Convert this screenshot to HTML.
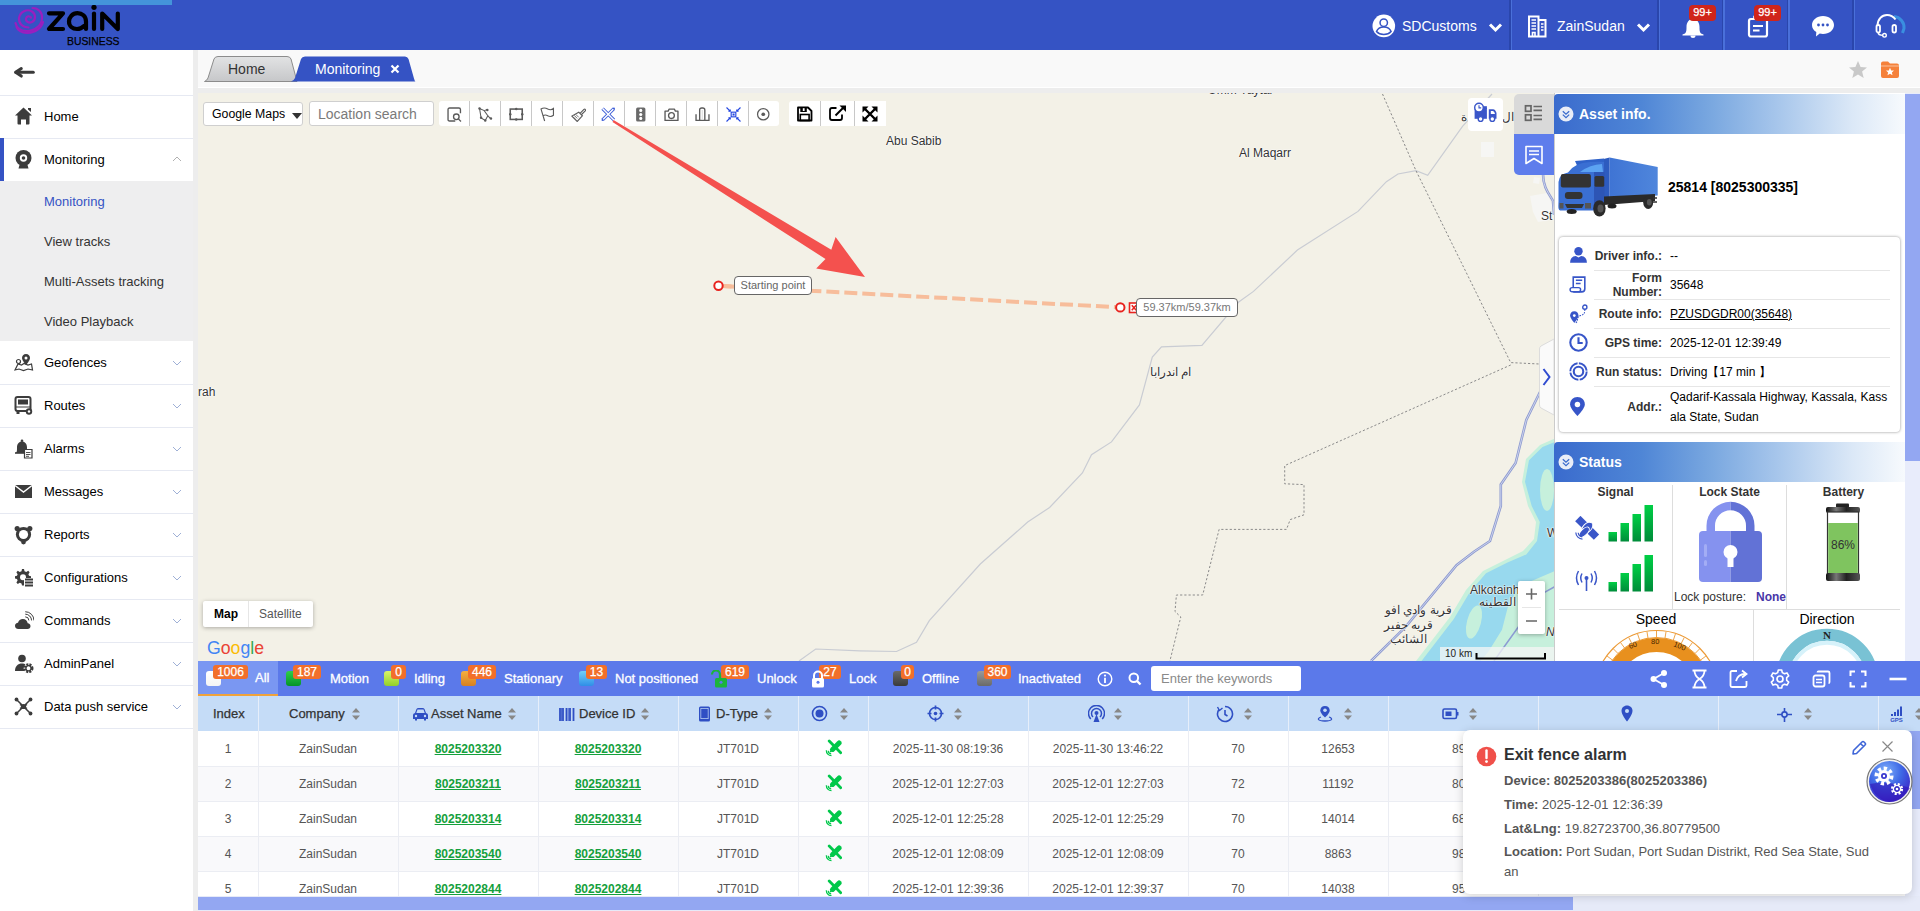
<!DOCTYPE html>
<html><head><meta charset="utf-8">
<style>
*{box-sizing:border-box;margin:0;padding:0}
html,body{width:1920px;height:911px;overflow:hidden;background:#fff;font-family:"Liberation Sans",sans-serif;font-size:13px;color:#333}
.abs{position:absolute}
#hdr{left:0;top:0;width:1920px;height:50px;background:#3553c4}
#prog{left:0;top:0;width:172px;height:5px;background:#4494da}
#side{left:0;top:50px;width:193px;height:861px;background:#fff}
#gut{left:193px;top:50px;width:5px;height:861px;background:#ededed}
#tabs{left:198px;top:50px;width:1722px;height:37px;background:#f9f9f9;z-index:5;border-bottom:1px solid #fff;height:38px}
#tabgut{left:198px;top:88px;width:1722px;height:5px;background:#ededed;z-index:5}
#map{left:198px;top:93px;width:1722px;height:568px;background:#f3f1e7;overflow:hidden}
#sbar{left:198px;top:661px;width:1722px;height:35px;background:#5b79ea}
#thead{left:198px;top:696px;width:1722px;height:35px;background:#c5dcf7}
#tbody{left:198px;top:731px;width:1722px;height:165px;background:#fff;overflow:hidden}
#hscroll{left:198px;top:896px;width:1722px;height:15px;background:#e6eaf8}
.htxt{color:#fff;font-size:14px;line-height:16px;white-space:nowrap;top:18px!important}
.hsep{top:0;width:3px;height:50px;background:linear-gradient(90deg,#2a46ac 0,#2a46ac 50%,#4a70da 50%,#4a70da 100%)}
.hbadge{background:#d0251a;color:#fff;font-size:11px;line-height:15px;height:16px;width:27px;text-align:center;border-radius:4px;-webkit-text-stroke:0.25px #fff}
.sl{left:0;width:193px;height:1px;background:#e6e9f2}
.mi{left:44px;height:43px;line-height:43px;font-size:13px;color:#000;white-space:nowrap}
.si{left:44px;height:40px;line-height:40px;font-size:13px;color:#333;white-space:nowrap}
.si.act{color:#3553c4}
.tsel{background:#fff;border:1px solid #cfcfcf;border-radius:3px;font-size:12.3px;line-height:15px;color:#000;white-space:nowrap}
.mtxt{font-size:12px;line-height:14px;color:#333;white-space:nowrap;text-shadow:0 0 2px #fff,0 0 2px #fff,0 0 1px #fff}
.phdr{background:linear-gradient(90deg,#3a6bcd 0%,#4f86d6 25%,#7aa8e0 45%,#aac8ec 65%,#dbe8f7 85%,#f7fafd 100%);border-radius:4px 0 0 0}
.plab{left:36px;width:72px;text-align:right;font-size:12px;line-height:16px;font-weight:bold;color:#333;white-space:nowrap}
.pval{left:116px;font-size:12px;line-height:16px;color:#000;white-space:nowrap}
.stt{text-align:center;font-size:12px;line-height:14px;font-weight:bold;color:#333}
.sbadge{top:4px;height:14px;line-height:14px;background:#f26f2a;color:#fff;font-size:12px;text-align:center;border-radius:3px;-webkit-text-stroke:0.25px #fff}
.stxt{top:10px;font-size:13px;line-height:15px;color:#fff;white-space:nowrap;-webkit-text-stroke:0.3px #fff}
.tht{top:10px;font-size:13px;line-height:15px;color:#333;white-space:nowrap;-webkit-text-stroke:0.25px #333}
.td{height:35px;line-height:36px;text-align:center;font-size:12px;color:#555;white-space:nowrap}
.td a{color:#14a03c;font-weight:bold;text-decoration:underline}
.pop{left:1504px;font-size:13px;line-height:16px;color:#555;white-space:nowrap}
.pop b{color:#555}
</style></head>
<body>
<div id="hdr" class="abs">
<svg class="abs" style="left:0;top:0" width="130" height="50" viewBox="0 0 130 50">
 <g fill="none" stroke="#9a1fbf" stroke-width="2.2" stroke-linecap="round" transform="translate(5.5,0)">
  <path d="M25.5 17.5 C24 15.5 21 16 20.5 18.5 C20 21.5 23.5 23.5 26.5 22 C30.5 20 30.5 14 26.5 11.5 C21.5 8.5 14.5 11.5 13.5 18 C13 23.5 17 27.5 23 27.5"/>
  <path d="M27 8 C33 8 37 12.5 36.5 18.5 C36 25.5 29.5 31 21 31 C15 31 11 27.5 10 23"/>
  <path d="M37.5 22 C36 28 30 32.5 22 32.8 C16 33 12 30 11 27"/>
 </g>
 <g fill="none" stroke="#000" stroke-width="4.2" stroke-linecap="round" stroke-linejoin="round">
  <path d="M49 13.3 H63 L49 29 H63"/>
  <path d="M86 28.9 V21.5 C86 16 82 13.2 77.5 13.2 C72.5 13.2 69 17 69 21.5 C69 26 72.5 29 77 29 C80 29 82.5 27.5 84 26"/>
  <path d="M94 13.5 V29"/>
  <path d="M102.2 29 V13.5 L117.8 29 V13.5"/>
 </g>
 <circle cx="94" cy="7.3" r="2.6" fill="#000"/>
 <text x="67" y="44.6" font-family="Liberation Sans" font-size="11.8" textLength="52.5" lengthAdjust="spacingAndGlyphs" fill="#000" stroke="#000" stroke-width="0.25">BUSINESS</text>
</svg>

<!-- header right -->
<svg class="abs" style="left:1372px;top:14px" width="24" height="24" viewBox="0 0 24 24">
 <circle cx="11.8" cy="11.9" r="11.3" fill="#fff"/>
 <circle cx="11.75" cy="8.7" r="3.7" fill="#fff" stroke="#3553c4" stroke-width="1.5"/>
 <path d="M4.5 17.6 Q6.2 12.9 11.8 12.9 Q17.4 12.9 19.1 17.6 Q16.5 20.6 11.8 20.6 Q7.1 20.6 4.5 17.6 Z" fill="#fff" stroke="#3553c4" stroke-width="1.5"/>
</svg>
<div class="abs htxt" style="left:1402px;top:17px">SDCustoms</div>
<svg class="abs" style="left:1488px;top:22px" width="15" height="11" viewBox="0 0 15 11"><path d="M2 2.5 L7.5 8 L13 2.5" fill="none" stroke="#fff" stroke-width="3"/></svg>
<div class="abs hsep" style="left:1509px"></div>
<svg class="abs" style="left:1527px;top:15px" width="22" height="23" viewBox="0 0 22 23">
 <path d="M2 1.5 H11.5 V21.5 H2 Z M11.5 5 H18.5 V21.5 H11.5" fill="none" stroke="#fff" stroke-width="2"/>
 <path d="M4.5 5 H9 M4.5 8 H9 M4.5 11 H9 M4.5 14 H9 M14 9 H16.5 M14 12 H16.5 M14 15 H16.5 M5.5 21.5 V17.5 H8 V21.5" fill="none" stroke="#fff" stroke-width="1.6"/>
</svg>
<div class="abs htxt" style="left:1557px;top:17px">ZainSudan</div>
<svg class="abs" style="left:1636px;top:22px" width="15" height="11" viewBox="0 0 15 11"><path d="M2 2.5 L7.5 8 L13 2.5" fill="none" stroke="#fff" stroke-width="3"/></svg>
<div class="abs hsep" style="left:1657px"></div>
<svg class="abs" style="left:1681px;top:17px" width="24" height="21" viewBox="0 0 24 21">
 <path d="M4 16.5 C5.5 15 5.5 13 5.5 10 C5.5 5.5 8 2 12 2 C16 2 18.5 5.5 18.5 10 C18.5 13 18.5 15 20 16.5 L22.5 17.5 V18.5 H1.5 V17.5 Z" fill="#fff"/>
 <path d="M9.5 18.5 C9.5 20.3 10.5 21 12 21 C13.5 21 14.5 20.3 14.5 18.5 Z" fill="#fff"/>
</svg>
<div class="abs hbadge" style="left:1689px;top:5px">99+</div>
<div class="abs hsep" style="left:1722px"></div>
<svg class="abs" style="left:1747px;top:15px" width="22" height="23" viewBox="0 0 22 23">
 <rect x="2" y="4" width="18" height="17.5" rx="2" fill="none" stroke="#fff" stroke-width="2.2"/>
 <path d="M7 4 V1.5 H15 V4" fill="#fff" stroke="#fff" stroke-width="1.5"/>
 <path d="M6 11 H16 M6 15.5 H12.5" stroke="#fff" stroke-width="2.2"/>
</svg>
<div class="abs hbadge" style="left:1754px;top:5px">99+</div>
<div class="abs hsep" style="left:1787px"></div>
<svg class="abs" style="left:1811px;top:15px" width="24" height="22" viewBox="0 0 24 22">
 <path d="M12 1 C18.2 1 23 5 23 10 C23 15 18.2 19 12 19 C10.8 19 9.7 18.8 8.7 18.6 L5 21.5 L5.3 17 C2.6 15.5 1 13 1 10 C1 5 5.8 1 12 1 Z" fill="#fff"/>
 <circle cx="7.5" cy="10" r="1.4" fill="#3553c4"/><circle cx="12" cy="10" r="1.4" fill="#3553c4"/><circle cx="16.5" cy="10" r="1.4" fill="#3553c4"/>
</svg>
<div class="abs hsep" style="left:1852px"></div>
<svg class="abs" style="left:1874px;top:13px" width="32" height="25" viewBox="0 0 32 25">
 <path d="M20 3.5 A11 11 0 0 1 30 15.5 L28.5 20" fill="none" stroke="#3a8fe0" stroke-width="3"/>
 <path d="M3.5 13 C3.5 6 8 2 13 2 C16.5 2 19.5 3.8 21.5 6.5" fill="none" stroke="#fff" stroke-width="2"/>
 <rect x="2.5" y="12" width="3.5" height="7.5" rx="1.75" fill="none" stroke="#fff" stroke-width="1.8"/>
 <rect x="18.5" y="12" width="3.5" height="7.5" rx="1.75" fill="none" stroke="#fff" stroke-width="1.8"/>
 <path d="M4.2 19.5 C4.2 21.5 6 22.3 9 22.3" fill="none" stroke="#fff" stroke-width="1.6"/>
 <circle cx="10.5" cy="22.3" r="1.8" fill="none" stroke="#fff" stroke-width="1.4"/>
</svg>
</div>
<div id="prog" class="abs"></div>
<div id="side" class="abs">
<svg class="abs" style="left:13px;top:15px" width="24" height="15" viewBox="0 0 24 15"><path d="M3 7.3 H20.3" stroke="#3a3a3a" stroke-width="3" stroke-linecap="round"/><path d="M8.3 3.5 L2.6 7.3 L8.3 11.1" fill="none" stroke="#3a3a3a" stroke-width="3" stroke-linecap="round" stroke-linejoin="round"/></svg>
<div class="abs sl" style="top:45px"></div>
<div class="abs mi" style="top:45px"><span>Home</span></div>
<svg class="abs" style="left:14px;top:56px" width="19" height="19" viewBox="0 0 19 19"><path d="M9.5 1.5 L1 9.5 H3.5 V17.5 Q3.5 18.5 4.5 18.5 H7 V13.5 H12 V18.5 H14.5 Q15.5 18.5 15.5 17.5 V9.5 H18 Z M14 2 H17 V6 L14 3.5Z" fill="#3c3c3c"/></svg>
<div class="abs sl" style="top:88px"></div>
<div class="abs" style="left:0;top:88px;width:4px;height:43px;background:#3553c4"></div>
<div class="abs mi" style="top:88px"><span>Monitoring</span></div>
<svg class="abs" style="left:15px;top:100px" width="17" height="19" viewBox="0 0 17 19"><circle cx="8.5" cy="8" r="8" fill="#3c3c3c"/><circle cx="8.5" cy="8" r="3.7" fill="#fff"/><circle cx="8.5" cy="8" r="1.8" fill="#3c3c3c"/><path d="M4.5 15 H12.5 L13.5 18.5 H3.5 Z" fill="#3c3c3c"/></svg>
<svg class="abs" style="left:171px;top:105px" width="12" height="8" viewBox="0 0 12 8"><path d="M2 6 L6 2 L10 6" fill="none" stroke="#b0b0b0" stroke-width="1"/></svg>
<div class="abs" style="left:0;top:131px;width:193px;height:160px;background:#eeeeef"></div>
<div class="abs si act" style="top:132px">Monitoring</div>
<div class="abs si" style="top:172px">View tracks</div>
<div class="abs si" style="top:212px">Multi-Assets tracking</div>
<div class="abs si" style="top:252px">Video Playback</div>
<div class="abs mi" style="top:291px"><span>Geofences</span></div>
<svg class="abs" style="left:14px;top:303px" width="20" height="20" viewBox="0 0 20 20"><path d="M1 17 L4 11 L7.5 12 L10 10.5 L14 12 L17.5 11 L18.5 17 L14 16 L9.5 17.5 L5 16 Z" fill="none" stroke="#3c3c3c" stroke-width="1.2"/><path d="M12 1 C9.5 1 8 3 8 5 C8 7.5 12 12 12 12 C12 12 16 7.5 16 5 C16 3 14.5 1 12 1 Z" fill="#3c3c3c"/><circle cx="12" cy="5" r="1.5" fill="#fff"/><circle cx="4.5" cy="8.5" r="2" fill="none" stroke="#3c3c3c" stroke-width="1.2"/></svg>
<svg class="abs" style="left:171px;top:309px" width="12" height="8" viewBox="0 0 12 8"><path d="M2 2 L6 6 L10 2" fill="none" stroke="#9fb0d6" stroke-width="1"/></svg>
<div class="abs sl" style="top:334px"></div>
<div class="abs mi" style="top:334px"><span>Routes</span></div>
<svg class="abs" style="left:14px;top:346px" width="20" height="20" viewBox="0 0 20 20"><rect x="1.5" y="1" width="15" height="14" rx="2" fill="none" stroke="#3c3c3c" stroke-width="2"/><rect x="4" y="3.5" width="10" height="5" fill="#3c3c3c"/><path d="M2 11 H16" stroke="#3c3c3c" stroke-width="1"/><rect x="2.5" y="15" width="3" height="3" fill="#3c3c3c"/><circle cx="15" cy="15.5" r="3.2" fill="#3c3c3c"/><circle cx="15" cy="15.5" r="1.2" fill="#fff"/></svg>
<svg class="abs" style="left:171px;top:352px" width="12" height="8" viewBox="0 0 12 8"><path d="M2 2 L6 6 L10 2" fill="none" stroke="#9fb0d6" stroke-width="1"/></svg>
<div class="abs sl" style="top:377px"></div>
<div class="abs mi" style="top:377px"><span>Alarms</span></div>
<svg class="abs" style="left:14px;top:389px" width="20" height="20" viewBox="0 0 20 20"><path d="M2 14 C3 13 3 11 3 8.5 C3 5 5 2.5 8 2.5 C11 2.5 13 5 13 8.5 V14 Z" fill="#3c3c3c"/><circle cx="8" cy="1.8" r="1.3" fill="#3c3c3c"/><path d="M1 14 H13" stroke="#3c3c3c" stroke-width="1.6"/><path d="M10.5 10.5 H18 V19 H10.5 Z" fill="#fff" stroke="#3c3c3c" stroke-width="1.2"/><path d="M12 13.5 H16.5 M12 15.5 H16.5 M12 17.3 H15" stroke="#3c3c3c" stroke-width="0.9"/></svg>
<svg class="abs" style="left:171px;top:395px" width="12" height="8" viewBox="0 0 12 8"><path d="M2 2 L6 6 L10 2" fill="none" stroke="#9fb0d6" stroke-width="1"/></svg>
<div class="abs sl" style="top:420px"></div>
<div class="abs mi" style="top:420px"><span>Messages</span></div>
<svg class="abs" style="left:14px;top:432px" width="20" height="20" viewBox="0 0 20 20"><path d="M1 3 H18 V16 H1 Z" fill="#3c3c3c"/><path d="M1 3.5 L9.5 10 L18 3.5" fill="none" stroke="#fff" stroke-width="1.4"/></svg>
<svg class="abs" style="left:171px;top:438px" width="12" height="8" viewBox="0 0 12 8"><path d="M2 2 L6 6 L10 2" fill="none" stroke="#9fb0d6" stroke-width="1"/></svg>
<div class="abs sl" style="top:463px"></div>
<div class="abs mi" style="top:463px"><span>Reports</span></div>
<svg class="abs" style="left:14px;top:475px" width="20" height="20" viewBox="0 0 20 20"><circle cx="9.5" cy="9.5" r="7.6" fill="#3c3c3c"/><circle cx="3.2" cy="3.6" r="2.6" fill="#3c3c3c"/><circle cx="15.8" cy="3.6" r="2.6" fill="#3c3c3c"/><circle cx="9.5" cy="17" r="2.4" fill="#3c3c3c"/><circle cx="9.5" cy="9.5" r="4.6" fill="#fff"/></svg>
<svg class="abs" style="left:171px;top:481px" width="12" height="8" viewBox="0 0 12 8"><path d="M2 2 L6 6 L10 2" fill="none" stroke="#9fb0d6" stroke-width="1"/></svg>
<div class="abs sl" style="top:506px"></div>
<div class="abs mi" style="top:506px"><span>Configurations</span></div>
<svg class="abs" style="left:14px;top:518px" width="20" height="20" viewBox="0 0 20 20"><path d="M8 1 L10 1 L10.5 3.2 L12.3 4 L14.2 2.8 L15.6 4.2 L14.4 6.2 L15 7.8 L17 8.3 V10.5 L15 11 L14.4 12.6 L15.6 14.5 L14.2 15.9 L12.3 14.7 L10.5 15.5 L10 17.5 H8 L7.5 15.5 L5.7 14.7 L3.8 15.9 L2.4 14.5 L3.6 12.6 L3 11 L1 10.5 V8.3 L3 7.8 L3.6 6.2 L2.4 4.2 L3.8 2.8 L5.7 4 L7.5 3.2 Z" fill="#3c3c3c"/><circle cx="9" cy="9.3" r="3" fill="#fff"/><path d="M10 10 H19.5 V19.5 H10 Z" fill="#fff"/><path d="M11 11.5 H19 M11 14.5 H19 M11 17.5 H19" stroke="#3c3c3c" stroke-width="1.8"/></svg>
<svg class="abs" style="left:171px;top:524px" width="12" height="8" viewBox="0 0 12 8"><path d="M2 2 L6 6 L10 2" fill="none" stroke="#9fb0d6" stroke-width="1"/></svg>
<div class="abs sl" style="top:549px"></div>
<div class="abs mi" style="top:549px"><span>Commands</span></div>
<svg class="abs" style="left:14px;top:561px" width="20" height="20" viewBox="0 0 20 20"><path d="M4.5 18 C2 18 1 16.5 1 14.8 C1 13 2.3 11.8 4 11.7 C4.5 9.5 6.5 8 8.8 8 C11.5 8 13.5 10 13.7 12.3 C15.5 12.5 16.5 13.7 16.5 15.2 C16.5 16.8 15.3 18 13.5 18 Z" fill="#3c3c3c"/><path d="M12.5 6.5 A4 4 0 0 1 16.5 10.5 M12.5 3.5 A7 7 0 0 1 19.5 10.5 M12.5 0.8 A9.7 9.7 0 0 1 22.2 10.5" fill="none" stroke="#3c3c3c" stroke-width="1.1" transform="scale(0.9)"/></svg>
<svg class="abs" style="left:171px;top:567px" width="12" height="8" viewBox="0 0 12 8"><path d="M2 2 L6 6 L10 2" fill="none" stroke="#9fb0d6" stroke-width="1"/></svg>
<div class="abs sl" style="top:592px"></div>
<div class="abs mi" style="top:592px"><span>AdminPanel</span></div>
<svg class="abs" style="left:14px;top:604px" width="20" height="20" viewBox="0 0 20 20"><circle cx="8" cy="4.5" r="3.8" fill="#3c3c3c"/><path d="M1 17 C1 12 4 9.5 8 9.5 C9.5 9.5 10.5 9.8 11.5 10.3 L10 17 Z" fill="#3c3c3c"/><circle cx="14.5" cy="14.2" r="4.8" fill="#fff"/><circle cx="14.5" cy="14.2" r="3.6" fill="none" stroke="#3c3c3c" stroke-width="2.8" stroke-dasharray="1.9 1"/><circle cx="14.5" cy="14.2" r="2.6" fill="none" stroke="#3c3c3c" stroke-width="1.2"/></svg>
<svg class="abs" style="left:171px;top:610px" width="12" height="8" viewBox="0 0 12 8"><path d="M2 2 L6 6 L10 2" fill="none" stroke="#9fb0d6" stroke-width="1"/></svg>
<div class="abs sl" style="top:635px"></div>
<div class="abs mi" style="top:635px"><span>Data push service</span></div>
<svg class="abs" style="left:14px;top:647px" width="20" height="20" viewBox="0 0 20 20"><path d="M2.5 2.5 L16.5 16.5 M16.5 2.5 L2.5 16.5" stroke="#3c3c3c" stroke-width="1.5"/><path d="M6 7.5 Q9.5 10.5 13 7.5 M6 11.5 Q9.5 8.5 13 11.5" fill="none" stroke="#3c3c3c" stroke-width="1.3"/><circle cx="2.5" cy="2.5" r="1.9" fill="#3c3c3c"/><circle cx="16.5" cy="2.5" r="1.9" fill="#3c3c3c"/><circle cx="2.5" cy="16.5" r="1.9" fill="#3c3c3c"/><circle cx="16.5" cy="16.5" r="1.9" fill="#3c3c3c"/><circle cx="9.5" cy="9.5" r="2.6" fill="#3c3c3c"/></svg>
<svg class="abs" style="left:171px;top:653px" width="12" height="8" viewBox="0 0 12 8"><path d="M2 2 L6 6 L10 2" fill="none" stroke="#9fb0d6" stroke-width="1"/></svg>
<div class="abs sl" style="top:678px"></div>
</div>
<div id="gut" class="abs"></div>
<div id="tabs" class="abs">
<svg class="abs" style="left:0;top:0" width="230" height="38" viewBox="198 50 230 38">
 <defs><linearGradient id="tg" x1="0" y1="0" x2="0" y2="1"><stop offset="0" stop-color="#e2e3e4"/><stop offset="1" stop-color="#c6c7c9"/></linearGradient></defs>
 <path d="M204.5 81.5 Q207 80.5 208 78 L214 59 Q215 56.5 218 56.5 H287 Q290 56.5 291 59 L297 81.5 Z" fill="url(#tg)" stroke="#8c8c8c" stroke-width="1"/>
 <path d="M291 81.5 Q294 80.5 295 78 L301 59 Q302 56.5 305 56.5 H405 Q407.5 56.5 408.5 59 L414 78.5 Q414.8 81.5 415.5 81.5 Z" fill="#3553c4"/>
</svg>
<div class="abs" style="left:30px;top:11px;font-size:14px;line-height:16px;color:#333">Home</div>
<div class="abs" style="left:117px;top:11px;font-size:14px;line-height:16px;color:#fff">Monitoring</div>
<svg class="abs" style="left:192px;top:14px" width="10" height="10" viewBox="0 0 10 10"><path d="M1.5 1.5 L8.5 8.5 M8.5 1.5 L1.5 8.5" stroke="#fff" stroke-width="2.2"/></svg>
<svg class="abs" style="left:1650px;top:10px" width="20" height="19" viewBox="0 0 20 19"><path d="M10 1 L12.6 7 L19 7.4 L14.1 11.5 L15.7 18 L10 14.5 L4.3 18 L5.9 11.5 L1 7.4 L7.4 7 Z" fill="#c9c9c9"/></svg>
<svg class="abs" style="left:1682px;top:10px" width="20" height="19" viewBox="0 0 20 19"><path d="M1 3.5 Q1 1.5 3 1.5 H8 L10 3.5 H17 Q19 3.5 19 5.5 V16 Q19 18 17 18 H3 Q1 18 1 16 Z" fill="#f5813b"/><path d="M1 6 H19" stroke="#fbc29e" stroke-width="1"/><path d="M10 7.8 L11.2 10.4 L14 10.6 L11.9 12.4 L12.5 15.2 L10 13.7 L7.5 15.2 L8.1 12.4 L6 10.6 L8.8 10.4 Z" fill="#fff"/></svg>
</div>
<div id="tabgut" class="abs"></div>
<div id="map" class="abs"></div>
<svg class="abs" style="left:198px;top:93px" width="1722" height="568" viewBox="198 93 1722 568">
 <polyline points="799.0,661.0 815.7,649.0 860.0,650.8 896.5,651.5 916.5,642.4 929.3,620.6 980.3,564.0 1027.7,522.1 1049.6,507.5 1082.4,472.9 1091.5,454.7 1111.5,441.9 1139.4,404.9 1152.3,357.0 1161.5,346.8 1201.9,345.3 1238.7,302.0 1253.5,291.4 1297.4,250.1 1358.0,211.4 1386.4,181.7 1398.0,174.0 1416.0,170.7 1427.7,175.3 1462.5,126.3 1492.0,94.0" fill="none" stroke="#c9ccd3" stroke-width="1.2"/>
 <polyline points="1382.5,94.0 1416.0,170.7 1510.7,362.6 1560.0,365.0" fill="none" stroke="#8a8a8a" stroke-width="1" stroke-dasharray="2.2 2"/>
 <polyline points="1510.7,365.0 1284.7,465.6 1284.7,483.8 1304.0,484.6 1304.0,514.8 1290.2,519.6 1286.5,529.4 1219.1,529.4 1202.7,595.0 1176.4,595.0 1175.0,611.5 1180.8,617.0 1169.9,661.0" fill="none" stroke="#8a8a8a" stroke-width="1" stroke-dasharray="2.2 2"/>
 <path d="M1416 661 L1450 617 L1466 590 L1483 571 L1505 560 L1523 551 L1534 539 L1536 522 L1528 506 L1522 482 L1526 459 L1540 445 L1556 438 L1556 661 Z" fill="#c6f0dc"/>
 <path d="M1421.5 661 L1453.8 619 L1469.9 592 L1486 573.2 L1507.5 562.5 L1526.3 554.4 L1537 541 L1539.8 522 L1531.7 506 L1525 481.8 L1529 460.3 L1542.5 446.9 L1556 441.5 L1556 570.5 L1518.3 586.7 L1507.5 608.2 L1502 629.7 L1488.7 651.2 L1480.6 661 Z" fill="#98d9ee"/>
 <ellipse cx="1547" cy="490" rx="7" ry="21" fill="#c6f0dc"/>
 <ellipse cx="1474" cy="622" rx="7" ry="17" transform="rotate(15 1474 622)" fill="#c6f0dc"/>
 <polyline points="1371,661 1400,632.4 1405.4,627 1456.5,565.2 1474,551.7 1490,541 1500.8,506 1500.8,484.5 1515.6,463 1526.3,420 1540,392 1556,365" fill="none" stroke="#8e9bd0" stroke-width="2.6"/>
 <polyline points="1371,661 1400,632.4 1405.4,627 1456.5,565.2 1474,551.7 1490,541 1500.8,506 1500.8,484.5 1515.6,463 1526.3,420 1540,392 1556,365" fill="none" stroke="#d3d8ef" stroke-width="0.9"/>
 <polyline points="1494,661 1518.3,627 1545,592 1556,586" fill="none" stroke="#8c9bd3" stroke-width="1.5"/>
 <path d="M1530 196 L1547 193 L1552 205 L1550 220 L1538 222 L1533 212 Z" fill="#f6f6f4"/><path d="M1534 177 L1540 178 L1539 184 L1533 183 Z" fill="#f6f6f4"/><path d="M1543 174 C1543 188 1550 195 1553 201 L1554 215" fill="none" stroke="#8e9bd0" stroke-width="2.6"/><path d="M1543 174 C1543 188 1550 195 1553 201 L1554 215" fill="none" stroke="#d3d8ef" stroke-width="0.9"/>
 <rect x="1481" y="142" width="13" height="15" fill="#f6f6f4"/>
 
 <line x1="718.5" y1="285.8" x2="1120.3" y2="307.4" stroke="#f7bd9b" stroke-width="4" stroke-dasharray="13 5"/>
 <line x1="718.5" y1="285.8" x2="740" y2="287" stroke="#f7bd9b" stroke-width="4"/>
 <circle cx="718.5" cy="285.8" r="4.2" fill="#fff" stroke="#e8231e" stroke-width="2"/>
 <circle cx="1120.3" cy="307.4" r="4.2" fill="#fff" stroke="#e8231e" stroke-width="2"/>
 <rect x="1129.5" y="303" width="9" height="9.5" fill="#fff" stroke="#e8231e" stroke-width="1.6"/>
 <path d="M1131.8 305.3 L1136.2 310.2 M1136.2 305.3 L1131.8 310.2" stroke="#e8231e" stroke-width="1.6"/>
</svg>
<div class="abs mlbl" style="left:734px;top:276px;width:78px;height:19px;background:#fff;border:1px solid #666;border-radius:4px;color:#666;font-size:11px;line-height:17px;text-align:center">Starting point</div>
<div class="abs mlbl" style="left:1136px;top:298px;width:102px;height:19px;background:#fff;border:1px solid #666;border-radius:4px;color:#777;font-size:11px;line-height:17px;text-align:center">59.37km/59.37km</div>
<div class="abs mtxt" style="left:886px;top:134px">Abu Sabib</div>
<div class="abs mtxt" style="left:1239px;top:146px">Al Maqarr</div>
<div class="abs mtxt" style="left:1208px;top:83px">Umm Yaytar</div>
<div class="abs mtxt" style="left:1150px;top:365px" dir="rtl">ام اندرابا</div>
<div class="abs mtxt" style="left:198px;top:385px">rah</div>
<div class="abs mtxt" style="left:1541px;top:209px">St</div>
<div class="abs mtxt" style="left:1461px;top:110px">ة</div><div class="abs mtxt" style="left:1502px;top:110px">ال</div>
<div class="abs mtxt" style="left:1470px;top:583px">Alkotainh</div>
<div class="abs mtxt" style="left:1479px;top:595px">القطينه</div>
<div class="abs mtxt" style="left:1385px;top:603px">قرية وادي افو</div>
<div class="abs mtxt" style="left:1384px;top:618px">قريه جفير</div>
<div class="abs mtxt" style="left:1390px;top:632px">الشائب</div>
<div class="abs mtxt" style="left:1547px;top:526px">W</div>
<div class="abs mtxt" style="left:1546px;top:625px;font-style:italic">N</div>
<!-- map type control -->
<div class="abs" style="left:203px;top:601px;width:110px;height:26px;background:#fff;border-radius:2px;box-shadow:0 1px 4px rgba(0,0,0,.3)"></div>
<div class="abs" style="left:248px;top:601px;width:1px;height:26px;background:#e6e6e6"></div>
<div class="abs" style="left:214px;top:607px;font-size:12px;line-height:14px;font-weight:bold;color:#000">Map</div>
<div class="abs" style="left:259px;top:607px;font-size:12px;line-height:14px;color:#565656">Satellite</div>
<svg class="abs" style="left:207px;top:637px" width="60" height="22" viewBox="0 0 60 22">
 <text x="0" y="17" font-family="Liberation Sans" font-size="18" textLength="57" lengthAdjust="spacingAndGlyphs"><tspan fill="#4285f4">G</tspan><tspan fill="#ea4335">o</tspan><tspan fill="#fbbc05">o</tspan><tspan fill="#4285f4">g</tspan><tspan fill="#34a853">l</tspan><tspan fill="#ea4335">e</tspan></text>
</svg>
<!-- zoom -->
<div class="abs" style="left:1518px;top:581px;width:27px;height:53px;background:#fff;border-radius:2px;box-shadow:0 1px 4px rgba(0,0,0,.3)"></div>
<div class="abs" style="left:1522px;top:607px;width:19px;height:1px;background:#e6e6e6"></div>
<svg class="abs" style="left:1518px;top:581px" width="27" height="53" viewBox="0 0 27 53"><path d="M8 13 H19 M13.5 7.5 V18.5 M8 40 H19" stroke="#666" stroke-width="1.6"/></svg>
<div class="abs" style="left:1440px;top:647px;width:115px;height:14px;background:rgba(245,245,245,.75)"></div>
<div class="abs" style="left:1445px;top:648px;font-size:10px;line-height:12px;color:#222">10 km</div>
<svg class="abs" style="left:1475px;top:650px" width="72" height="10" viewBox="0 0 72 10"><path d="M1.5 3 V8.5 H70 V3" fill="none" stroke="#000" stroke-width="2"/></svg>
<!-- truck clock icon -->
<div class="abs" style="left:1468px;top:98px;width:35px;height:33px;background:#fff;border-radius:4px"></div>
<svg class="abs" style="left:1472px;top:101px" width="27" height="22" viewBox="0 0 27 22">
 <path d="M2.6 7 H14.9 V17.8 H2.6 Z" fill="#3a56c9"/><path d="M9 5.2 H14.9 V8 H9Z" fill="#3a56c9"/>
 <path d="M16.8 8.2 H21 Q23.5 8.2 24.5 12 V17.8 H16.8 Z" fill="#3a56c9"/><path d="M18.8 10 H21 Q22.5 10.5 23 13 H18.8 Z" fill="#fff"/>
 <circle cx="7" cy="6.6" r="4.3" fill="#fff" stroke="#3a56c9" stroke-width="1.4"/><path d="M7 4.2 V6.9 H9.2" fill="none" stroke="#3a56c9" stroke-width="1.1"/>
 <circle cx="8.6" cy="18" r="2.4" fill="#fff" stroke="#3a56c9" stroke-width="1.4"/><circle cx="20.3" cy="18" r="2.4" fill="#fff" stroke="#3a56c9" stroke-width="1.4"/>
</svg>
<!-- side tabs -->
<div class="abs" style="left:1514px;top:94px;width:40px;height:40px;background:#d9d9d9;border-radius:5px 0 0 0"></div>
<svg class="abs" style="left:1524px;top:104px" width="20" height="20" viewBox="0 0 20 20"><rect x="1.5" y="1.8" width="5.5" height="5.5" fill="none" stroke="#666" stroke-width="1.7"/><rect x="1.5" y="10.8" width="5.5" height="5.5" fill="none" stroke="#666" stroke-width="1.7"/><path d="M9.5 2.5 H18 M9.5 6.3 H18 M9.5 11.5 H18 M9.5 15.3 H18" stroke="#666" stroke-width="1.7"/></svg>
<div class="abs" style="left:1514px;top:134px;width:40px;height:41px;background:#5e7dec;border-radius:0 0 0 5px"></div>
<svg class="abs" style="left:1524px;top:145px" width="20" height="20" viewBox="0 0 20 20"><path d="M2 1.5 H18 V18.5 L10 13.5 L2 18.5 Z" fill="none" stroke="#fff" stroke-width="1.6" stroke-linejoin="round"/><path d="M5 6 H15 M5 9.5 H15" stroke="#fff" stroke-width="1.6"/></svg>
<!-- collapse tab -->
<svg class="abs" style="left:1538px;top:338px" width="17" height="78" viewBox="0 0 17 78"><path d="M16 1 L3 8 Q1.5 9 1.5 11 V67 Q1.5 69 3 70 L16 77 Z" fill="#fafafa" stroke="#dcdcdc" stroke-width="1"/><path d="M5.5 31 L11.5 39 L5.5 47" fill="none" stroke="#2f4bd0" stroke-width="2"/></svg>
<!--TOOLBAR-->
<div class="abs tsel" style="left:203px;top:102px;width:100px;height:24px"><span style="position:absolute;left:8px;top:4px">Google Maps</span><svg style="position:absolute;left:88px;top:10px" width="10" height="6"><path d="M0 0 H10 L5 6Z" fill="#333"/></svg></div>
<div class="abs tsel" style="left:309px;top:101px;width:125px;height:25px;color:#7a7a7a"><span style="position:absolute;left:8px;top:4px;font-size:14px;line-height:16px">Location search</span></div>
<div class="abs" style="left:439px;top:101px;width:340px;height:25px;background:#fff;border-radius:3px"></div>
<svg class="abs" style="left:447px;top:107px" width="15" height="15" viewBox="0 0 14.5 14.5"><path d="M8 13.5 H2.5 Q1 13.5 1 12 V2.5 Q1 1 2.5 1 H11.5 Q13 1 13 2.5 V6" fill="none" stroke="#5a5a5a" stroke-width="1.3"/><circle cx="9" cy="9.5" r="2.7" fill="none" stroke="#5a5a5a" stroke-width="1.3"/><path d="M11 11.5 L13.5 14" stroke="#5a5a5a" stroke-width="1.3"/></svg>
<svg class="abs" style="left:478px;top:107px" width="15" height="15" viewBox="0 0 14.5 14.5"><path d="M1.5 1.5 L6 3.5 L9.5 8.5 L7 13 L3 10.5 Z" fill="none" stroke="#5a5a5a" stroke-width="1"/><path d="M6 3.5 L9 2.5 M9.5 8.5 L13 12" stroke="#5a5a5a" stroke-width="1"/><g fill="#5a5a5a"><circle cx="1.5" cy="1.5" r="1.2"/><circle cx="9" cy="3" r="1.2"/><circle cx="3" cy="10.5" r="1.2"/><circle cx="7" cy="13" r="1.2"/><circle cx="12.5" cy="11" r="1.2"/></g></svg>
<svg class="abs" style="left:509px;top:107px" width="15" height="15" viewBox="0 0 14.5 14.5"><rect x="1.2" y="2" width="11.6" height="10" fill="none" stroke="#5a5a5a" stroke-width="1.5"/><g fill="#5a5a5a"><circle cx="7" cy="2" r="1.2"/><circle cx="7" cy="12" r="1.2"/><circle cx="1.2" cy="7" r="1.2"/><circle cx="12.8" cy="7" r="1.2"/></g></svg>
<svg class="abs" style="left:539.5px;top:107px" width="15" height="15" viewBox="0 0 14.5 14.5"><path d="M4.5 13.5 L1 2 Q4 0 7.5 2 Q10.5 3.5 13 1.5 V8 Q10.5 10 7.5 8.5 Q5 7 3 8.5" fill="none" stroke="#5a5a5a" stroke-width="1.1"/></svg>
<svg class="abs" style="left:571px;top:107px" width="15" height="15" viewBox="0 0 14.5 14.5"><path d="M9 6 L12.5 2.3 Q13.3 1.5 13.7 2.3 L14 2.7 Q14.3 3.3 13.5 4 L10 7.5" fill="none" stroke="#5a5a5a" stroke-width="1.1"/><path d="M7.5 5 L11 8.5 L6 14 L0.8 8.8 Z" fill="none" stroke="#5a5a5a" stroke-width="1.1"/><path d="M3 8 L6 11 M4.5 7 L7.5 10 M2 9.5 L4.5 12" stroke="#5a5a5a" stroke-width="0.8"/></svg>
<svg class="abs" style="left:601px;top:107px" width="15" height="15" viewBox="0 0 14.5 14.5"><path d="M1.5 1.5 L12.5 12.5 M12.5 1.5 L1.5 12.5" stroke="#3f5fd8" stroke-width="3.2"/><path d="M1.5 1.5 L12.5 12.5 M12.5 1.5 L1.5 12.5" stroke="#fff" stroke-width="1.4"/><circle cx="1.5" cy="12.5" r="1" fill="#3f5fd8"/><circle cx="12.5" cy="1.5" r="1" fill="#3f5fd8"/></svg>
<svg class="abs" style="left:633px;top:107px" width="15" height="15" viewBox="0 0 14.5 14.5"><rect x="3" y="0.5" width="9" height="13.5" rx="1.5" fill="#6a6a6a"/><circle cx="7.5" cy="3.3" r="1.5" fill="#fff"/><circle cx="7.5" cy="7.2" r="1.5" fill="#fff"/><circle cx="7.5" cy="11" r="1.5" fill="#fff"/></svg>
<svg class="abs" style="left:664px;top:107px" width="15" height="15" viewBox="0 0 14.5 14.5"><path d="M1 4 H4 L5 2 H10 L11 4 H13.5 V13 H1 Z" fill="none" stroke="#5a5a5a" stroke-width="1.3" stroke-linejoin="round"/><circle cx="7.2" cy="8.3" r="2.8" fill="none" stroke="#5a5a5a" stroke-width="1.3"/></svg>
<svg class="abs" style="left:695px;top:107px" width="15" height="15" viewBox="0 0 14.5 14.5"><path d="M1 7 V13 H13.5 V7 M4.5 13 V3 Q4.5 1 6.5 1 H7.5 Q9.5 1 9.5 3 V13" fill="none" stroke="#5a5a5a" stroke-width="1.3"/><path d="M7 3 V12" stroke="#ddd" stroke-width="1"/></svg>
<svg class="abs" style="left:726px;top:107px" width="15" height="15" viewBox="0 0 14.5 14.5"><rect x="5" y="5" width="4.5" height="4.5" fill="none" stroke="#2447e0" stroke-width="1.1"/><rect x="6.3" y="6.3" width="2" height="2" fill="#2447e0"/><path d="M0.5 0.5 L4 4 M14 0.5 L10.5 4 M0.5 14 L4 10.5 M14 14 L10.5 10.5" stroke="#2447e0" stroke-width="1.1"/><path d="M2.3 4 H4 V2.3 M12.2 4 H10.5 V2.3 M2.3 10.5 H4 V12.2 M12.2 10.5 H10.5 V12.2" fill="none" stroke="#2447e0" stroke-width="1.3"/></svg>
<svg class="abs" style="left:756px;top:107px" width="15" height="15" viewBox="0 0 14.5 14.5"><circle cx="7" cy="7" r="5.5" fill="none" stroke="#5a5a5a" stroke-width="1.2"/><circle cx="7" cy="7" r="1.8" fill="#5a5a5a"/></svg>
<div class="abs" style="left:469px;top:101px;width:1px;height:25px;background:#c8c8c8"></div>
<div class="abs" style="left:500px;top:101px;width:1px;height:25px;background:#c8c8c8"></div>
<div class="abs" style="left:531px;top:101px;width:1px;height:25px;background:#c8c8c8"></div>
<div class="abs" style="left:562px;top:101px;width:1px;height:25px;background:#c8c8c8"></div>
<div class="abs" style="left:593px;top:101px;width:1px;height:25px;background:#c8c8c8"></div>
<div class="abs" style="left:624px;top:101px;width:1px;height:25px;background:#c8c8c8"></div>
<div class="abs" style="left:655px;top:101px;width:1px;height:25px;background:#c8c8c8"></div>
<div class="abs" style="left:686px;top:101px;width:1px;height:25px;background:#c8c8c8"></div>
<div class="abs" style="left:717px;top:101px;width:1px;height:25px;background:#c8c8c8"></div>
<div class="abs" style="left:748px;top:101px;width:1px;height:25px;background:#c8c8c8"></div>
<div class="abs" style="left:789px;top:101px;width:97px;height:25px;background:#fff;border-radius:3px 0 0 3px"></div>
<div class="abs" style="left:820px;top:101px;width:1px;height:25px;background:#c8c8c8"></div><div class="abs" style="left:854px;top:101px;width:1px;height:25px;background:#c8c8c8"></div>
<svg class="abs" style="left:797px;top:106px" width="16" height="16" viewBox="0 0 16 16"><path d="M1 1.5 H11 L14.5 5 V14.5 H1 Z" fill="none" stroke="#000" stroke-width="1.8" stroke-linejoin="round"/><rect x="3.3" y="1.5" width="6.5" height="4.5" fill="#000"/><rect x="5.8" y="2.2" width="1.8" height="2.8" fill="#fff"/><rect x="3.3" y="8.5" width="8.8" height="6" fill="none" stroke="#000" stroke-width="1.6"/></svg>
<svg class="abs" style="left:829px;top:105px" width="18" height="16" viewBox="0 0 18 16"><path d="M7.5 3 H3 Q1 3 1 5 V13 Q1 15 3 15 H11 Q13 15 13 13 V9.5" fill="none" stroke="#000" stroke-width="1.8"/><path d="M6.5 10.5 L15 2" stroke="#000" stroke-width="1.9"/><path d="M10.5 0.5 H17 V7 Z" fill="#000"/></svg>
<svg class="abs" style="left:862px;top:106px" width="16" height="16" viewBox="0 0 16 16"><path d="M3 3 L13 13 M13 3 L3 13" stroke="#000" stroke-width="2.4"/><path d="M0.5 0.5 H6.5 L0.5 6.5Z M15.5 0.5 V6.5 L9.5 0.5Z M0.5 15.5 V9.5 L6.5 15.5Z M15.5 15.5 H9.5 L15.5 9.5Z" fill="#000"/></svg>
<svg class="abs" style="left:600px;top:110px" width="280" height="180" viewBox="600 110 280 180">
 <polygon points="612.5,121.9 825.5,259.0 816.2,268.5 865.0,277.0 835.6,237.1 831.3,249.7 613.5,120.1" fill="#f4514e"/>
</svg>
<!--/TOOLBAR-->
<!--PANEL-->
<div class="abs" style="left:1554px;top:93px;width:351px;height:568px;background:#fff;overflow:hidden">
 <div class="abs" style="left:-1px;top:0;width:2px;height:568px;background:#cbcbcb"></div>
 <div class="abs phdr" style="left:0;top:1px;width:351px;height:40px"></div>
 <svg class="abs" style="left:4px;top:13px" width="16" height="16" viewBox="0 0 16 16"><circle cx="8" cy="8" r="7.5" fill="#e9edf7"/><path d="M4.8 5.2 L8 8.2 L11.2 5.2 M4.8 8.6 L8 11.6 L11.2 8.6" fill="none" stroke="#3a6bcd" stroke-width="1.3"/></svg>
 <div class="abs" style="left:25px;top:13px;font-size:14px;line-height:16px;font-weight:bold;color:#fff">Asset info.</div>
 <svg class="abs" style="left:4px;top:63px" width="101" height="62" viewBox="1558 156 101 62">
  <defs><linearGradient id="box" x1="0" y1="0" x2="1" y2="0"><stop offset="0" stop-color="#3f74d4"/><stop offset="1" stop-color="#4f86dc"/></linearGradient></defs>
  <path d="M1609.6 157.6 L1657.7 167 V195.5 L1609.6 198.5 Z" fill="url(#box)"/>
  <path d="M1603.5 159 L1609.6 157.6 V198.5 L1603.5 199 Z" fill="#2d5bbf"/>
  <path d="M1575 161 L1604 158.5 V173 H1579 Q1578 166 1575 161 Z" fill="#2f62c9"/>
  <path d="M1568 172.5 Q1574 163 1590 162 Q1600 161.5 1604 162 V200 H1600 V210 H1560 Q1558.5 209 1558.5 206 V182 Q1559 174 1568 172.5 Z" fill="#3a6fd3"/>
  <path d="M1580 172 Q1590 164.5 1602 164 L1603 172 Z" fill="#5ca3f2"/>
  <path d="M1594 172 H1604.5 V205 H1594 Z" fill="#2d55b5"/>
  <rect x="1560.8" y="173.9" width="30.1" height="13.5" rx="2" fill="#333"/>
  <rect x="1594.5" y="175.9" width="9.7" height="10.8" rx="1.5" fill="#333"/>
  <rect x="1564.9" y="192.1" width="17.6" height="6.8" rx="3" fill="#333"/>
  <path d="M1559 201.6 H1594 V210.4 H1560 Q1558.5 210 1558.5 208 Z" fill="#3a6fd3"/>
  <path d="M1565 204 H1584 L1582 208 H1567 Z" fill="#333"/>
  <rect x="1559.5" y="203" width="4" height="5.5" fill="#555"/><rect x="1585" y="203" width="6" height="5.5" fill="#555"/>
  <path d="M1604 196.5 L1655 194 V201 L1604 205 Z" fill="#2a2a2a"/>
  <ellipse cx="1571.7" cy="211.5" rx="5" ry="2.5" fill="#222"/>
  <ellipse cx="1612" cy="206" rx="4.5" ry="2.5" fill="#222"/>
  <ellipse cx="1599.4" cy="208.4" rx="6.2" ry="8.2" fill="#2a2a2a"/><ellipse cx="1600.5" cy="208.4" rx="3" ry="4" fill="#555"/>
  <ellipse cx="1648.2" cy="202.3" rx="5" ry="6.7" fill="#2a2a2a"/><ellipse cx="1649.3" cy="202.3" rx="2.4" ry="3.2" fill="#555"/>
  <path d="M1653 198 H1657 M1653 202 H1657" stroke="#333" stroke-width="1.3"/>
 </svg>
 <div class="abs" style="left:114px;top:86px;font-size:14px;line-height:16px;font-weight:bold;color:#000">25814 [8025300335]</div>
 <!-- card -->
 <div class="abs" style="left:5px;top:144px;width:341px;height:195px;background:#fff;border-radius:4px;box-shadow:0 0 3px rgba(0,0,0,.45)"></div>
 <div class="abs plab" style="top:155px">Driver info.:</div>
 <div class="abs pval" style="top:155px">--</div>
 <svg class="abs" style="left:15px;top:153px" width="19" height="20" viewBox="0 0 18 19"><circle cx="9" cy="5" r="4" fill="#3755c8"/><path d="M1 16 Q1 10 6.5 9.5 L9 11 L11.5 9.5 Q17 10 17 16 Z" fill="#3755c8"/></svg>
 <div class="abs plab" style="top:178px;line-height:14px">Form<br>Number:</div>
 <div class="abs pval" style="top:184px">35648</div>
 <svg class="abs" style="left:15px;top:182px" width="19" height="20" viewBox="0 0 18 19"><path d="M4 12 V2 H15 V13 Q15 16 12 16 H4" fill="none" stroke="#3755c8" stroke-width="1.5"/><path d="M6.5 5 H12.5 M6.5 8 H11" stroke="#3755c8" stroke-width="1.5"/><rect x="1" y="12" width="10" height="4" rx="2" fill="none" stroke="#3755c8" stroke-width="1.4"/></svg>
 <div class="abs plab" style="top:213px">Route info:</div>
 <div class="abs pval" style="top:213px"><u>PZUSDGDR00(35648)</u></div>
 <svg class="abs" style="left:15px;top:211px" width="19" height="20" viewBox="0 0 18 19"><path d="M5 7 C2.5 7 1 9 1 11 C1 13.5 5 18 5 18 C5 18 9 13.5 9 11 C9 9 7.5 7 5 7Z" fill="#3755c8"/><circle cx="5" cy="11" r="1.3" fill="#fff"/><circle cx="15" cy="3" r="2" fill="none" stroke="#3755c8" stroke-width="1.3"/><path d="M15 5 V6 Q15 10 11 11 Q8 12 8 15 Q8 17 6 18" fill="none" stroke="#3755c8" stroke-width="1" stroke-dasharray="1.5 1"/></svg>
 <div class="abs plab" style="top:242px">GPS time:</div>
 <div class="abs pval" style="top:242px">2025-12-01 12:39:49</div>
 <svg class="abs" style="left:15px;top:240px" width="19" height="20" viewBox="0 0 18 19"><circle cx="9" cy="9" r="7.8" fill="none" stroke="#3755c8" stroke-width="2"/><path d="M9 4 V9.5 H13" fill="none" stroke="#3755c8" stroke-width="2"/></svg>
 <div class="abs plab" style="top:271px">Run status:</div>
 <div class="abs pval" style="top:271px">Driving【17 min 】</div>
 <svg class="abs" style="left:15px;top:269px" width="19" height="20" viewBox="0 0 18 19"><circle cx="9" cy="9" r="7.8" fill="none" stroke="#3755c8" stroke-width="1.8" stroke-dasharray="11 1.3"/><circle cx="9" cy="9" r="4.5" fill="none" stroke="#3755c8" stroke-width="2"/></svg>
 <div class="abs plab" style="top:306px">Addr.:</div>
 <div class="abs pval" style="top:294px;line-height:20px">Qadarif-Kassala Highway, Kassala, Kass<br>ala State, Sudan</div>
 <svg class="abs" style="left:15px;top:303px" width="19" height="20" viewBox="0 0 18 19"><path d="M8 1 C4 1 1 4 1 8 C1 12 8 19 8 19 C8 19 15 12 15 8 C15 4 12 1 8 1Z" fill="#3755c8"/><circle cx="8" cy="8" r="2.6" fill="#fff"/></svg>
 <div class="abs" style="left:40px;top:177px;width:296px;height:1px;background:#e6e6e6"></div>
 <div class="abs" style="left:40px;top:206px;width:296px;height:1px;background:#e6e6e6"></div>
 <div class="abs" style="left:40px;top:235px;width:296px;height:1px;background:#e6e6e6"></div>
 <div class="abs" style="left:40px;top:264px;width:296px;height:1px;background:#e6e6e6"></div>
 <div class="abs" style="left:40px;top:293px;width:296px;height:1px;background:#e6e6e6"></div>
 <div class="abs phdr" style="left:0;top:349px;width:351px;height:40px"></div>
 <svg class="abs" style="left:4px;top:361px" width="16" height="16" viewBox="0 0 16 16"><circle cx="8" cy="8" r="7.5" fill="#e9edf7"/><path d="M4.8 5.2 L8 8.2 L11.2 5.2 M4.8 8.6 L8 11.6 L11.2 8.6" fill="none" stroke="#3a6bcd" stroke-width="1.3"/></svg>
 <div class="abs" style="left:25px;top:361px;font-size:14px;line-height:16px;font-weight:bold;color:#fff">Status</div>
 <div class="abs stt" style="left:5px;top:392px;width:113px">Signal</div>
 <div class="abs stt" style="left:119px;top:392px;width:113px">Lock State</div>
 <div class="abs stt" style="left:233px;top:392px;width:113px">Battery</div>
 <div class="abs" style="left:118px;top:392px;width:1px;height:125px;background:#ddd"></div>
 <div class="abs" style="left:232px;top:392px;width:1px;height:125px;background:#ddd"></div>
 <div class="abs" style="left:5px;top:516px;width:341px;height:1px;background:#ddd"></div>
 <div class="abs" style="left:199px;top:517px;width:1px;height:60px;background:#ddd"></div>
 <svg class="abs" style="left:20px;top:423px" width="27" height="26" viewBox="0 0 27 26">
  <path d="M3.8 2.5 L10.5 9.2" stroke="#3a56c8" stroke-width="7.5"/>
  <path d="M15.8 14.5 L22.5 21.2" stroke="#3a56c8" stroke-width="7.5"/>
  <ellipse cx="13.2" cy="11.8" rx="4.2" ry="6.8" transform="rotate(45 13.2 11.8)" fill="#3a56c8" stroke="#fff" stroke-width="1"/>
  <ellipse cx="10.2" cy="16.2" rx="6.5" ry="3.2" transform="rotate(-45 10.2 16.2)" fill="#3a56c8" stroke="#fff" stroke-width="1"/>
  <path d="M1.8 16.5 A7 7 0 0 0 8.5 23.2 M4.2 16.8 A4.5 4.5 0 0 0 8.2 20.8" fill="none" stroke="#3a56c8" stroke-width="1.2"/>
 </svg>
 <svg class="abs" style="left:54px;top:412px" width="46" height="37" viewBox="0 0 46 37"><defs><linearGradient id="sg" x1="0" y1="0" x2="0" y2="1"><stop offset="0" stop-color="#00cf45"/><stop offset="1" stop-color="#008c3a"/></linearGradient></defs><rect x="0.5" y="27" width="8.5" height="9.5" fill="url(#sg)"/><rect x="12.5" y="18" width="8.5" height="18.5" fill="url(#sg)"/><rect x="24.5" y="9" width="8.5" height="27.5" fill="url(#sg)"/><rect x="36.5" y="0" width="8.5" height="36.5" fill="url(#sg)"/></svg>
 <svg class="abs" style="left:20px;top:477px" width="26" height="22" viewBox="0 0 26 22">
  <circle cx="12.5" cy="8" r="2" fill="#3a56c8"/><path d="M12.5 9 V21" stroke="#3a56c8" stroke-width="1.6"/>
  <path d="M8 3.5 Q5.5 8 8 12.5 M17 3.5 Q19.5 8 17 12.5 M4.5 1 Q0.5 8 4.5 15 M20.5 1 Q24.5 8 20.5 15" fill="none" stroke="#3a56c8" stroke-width="1.5"/>
 </svg>
 <svg class="abs" style="left:54px;top:462px" width="46" height="37" viewBox="0 0 46 37"><rect x="0.5" y="27" width="8.5" height="9.5" fill="url(#sg)"/><rect x="12.5" y="18" width="8.5" height="18.5" fill="url(#sg)"/><rect x="24.5" y="9" width="8.5" height="27.5" fill="url(#sg)"/><rect x="36.5" y="0" width="8.5" height="36.5" fill="url(#sg)"/></svg>
 <svg class="abs" style="left:144px;top:408px" width="65" height="82" viewBox="0 0 65 82">
  <path d="M8.5 33 V24.8 A24 24 0 0 1 32.5 0.8 V9.3 A15.5 15.5 0 0 0 17 24.8 V33 Z" fill="#8592ef"/>
  <path d="M56.5 33 V24.8 A24 24 0 0 0 32.5 0.8 V9.3 A15.5 15.5 0 0 1 48 24.8 V33 Z" fill="#6272d6"/>
  <path d="M5 30 Q1 30 1 34 V77 Q1 81 5 81 H32.5 V30 Z" fill="#8592ef"/>
  <path d="M60 30 Q64 30 64 34 V77 Q64 81 60 81 H32.5 V30 Z" fill="#6272d6"/>
  <rect x="6" y="43" width="3" height="13" rx="1.5" fill="#a3adf5"/><rect x="6" y="59" width="3" height="6" rx="1.5" fill="#a3adf5"/>
  <circle cx="32.5" cy="51" r="7" fill="#fff"/><path d="M29.5 53 H35.5 V66 H29.5 Z" fill="#fff"/>
 </svg>
 <div class="abs" style="left:120px;top:497px;font-size:12px;line-height:14px;color:#333;white-space:nowrap">Lock posture:&nbsp;&nbsp;&nbsp;<b style="color:#4836a8">None</b></div>
 <svg class="abs" style="left:270px;top:410px" width="38" height="80" viewBox="0 0 38 80">
  <defs><linearGradient id="bt" x1="0" y1="0" x2="1" y2="0"><stop offset="0" stop-color="#111"/><stop offset=".3" stop-color="#777"/><stop offset=".6" stop-color="#222"/><stop offset="1" stop-color="#555"/></linearGradient></defs>
  <rect x="12" y="0.5" width="13" height="4" rx="1" fill="#222"/>
  <rect x="2" y="4" width="34" height="6" rx="2" fill="url(#bt)"/>
  <rect x="3.5" y="9" width="31" height="64" fill="#fff" stroke="#333" stroke-width="1.2"/>
  <rect x="4.2" y="20" width="29.6" height="52" fill="#7fc45f"/>
  <rect x="2" y="70" width="34" height="8" rx="2" fill="url(#bt)"/>
  <text x="19" y="46" text-anchor="middle" font-family="Liberation Sans" font-size="12" fill="#333">86%</text>
 </svg>
 <div class="abs" style="left:5px;top:518px;width:194px;text-align:center;font-size:14px;line-height:16px;color:#000">Speed</div>
 <div class="abs" style="left:200px;top:518px;width:146px;text-align:center;font-size:14px;line-height:16px;color:#000">Direction</div>
 <svg class="abs" style="left:40px;top:535px" width="125" height="33" viewBox="0 0 125 33">
  <circle cx="62.5" cy="64" r="61.5" fill="none" stroke="#ec9a36" stroke-width="1.2"/>
  <circle cx="62.5" cy="64" r="54.5" fill="none" stroke="#ec9a36" stroke-width="1"/>
  <path d="M8.5 64.0 L1.5 64.0 M9.2 55.6 L2.3 54.5 M11.1 47.3 L4.5 45.1 M14.4 39.5 L8.1 36.3 M18.8 32.3 L13.1 28.1 M24.3 25.8 L19.4 20.9 M30.8 20.3 L26.6 14.6 M38.0 15.9 L34.8 9.6 M45.8 12.6 L43.6 6.0 M54.1 10.7 L53.0 3.8 M62.5 10.0 L62.5 3.0 M70.9 10.7 L72.0 3.8 M79.2 12.6 L81.4 6.0 M87.0 15.9 L90.2 9.6 M94.2 20.3 L98.4 14.6 M100.7 25.8 L105.6 20.9 M106.2 32.3 L111.9 28.1 M110.6 39.5 L116.9 36.3 M113.9 47.3 L120.5 45.1 M115.8 55.6 L122.7 54.5 M116.5 64.0 L123.5 64.0 " stroke="#ec9a36" stroke-width="0.9"/>
  <circle cx="62.5" cy="64" r="47" fill="none" stroke="#e8901e" stroke-width="14"/>
  <text x="36" y="21" font-family="Liberation Sans" font-size="7.5" fill="#4a2800" transform="rotate(-22 36 21)">60</text>
  <text x="57" y="16" font-family="Liberation Sans" font-size="7.5" fill="#4a2800">80</text>
  <text x="79" y="18" font-family="Liberation Sans" font-size="7.5" fill="#4a2800" transform="rotate(22 79 18)">100</text>
 </svg>
 <svg class="abs" style="left:208px;top:535px" width="130" height="33" viewBox="0 0 130 33">
  <circle cx="65" cy="52" r="45.25" fill="none" stroke="#79c2d4" stroke-width="12"/>
  <circle cx="65" cy="52" r="37.2" fill="none" stroke="#d6f2fa" stroke-width="4"/>
  <text x="65" y="11" text-anchor="middle" font-family="Liberation Serif" font-size="11" font-weight="bold" fill="#222">N</text>
 </svg>
</div>
<div class="abs" style="left:1905px;top:93px;width:15px;height:568px;background:#e8ecfb"></div>
<div class="abs" style="left:1905px;top:94px;width:15px;height:367px;background:#93a7f2"></div>
<!--/PANEL-->

<div id="sbar" class="abs">
 <div class="abs" style="left:0;top:0;width:80px;height:33px;background:#7a97f2"></div>
 <div class="abs" style="left:0;top:33px;width:80px;height:2px;background:#f0a23a"></div>
 <div class="abs" style="left:8px;top:10px;width:15px;height:15px;border-radius:3px;background:linear-gradient(180deg,#ffffff,#f4f4f4)"></div>
 <div class="abs sbadge" style="left:15px;width:35px">1006</div>
 <div class="abs stxt" style="left:57px;top:9px">All</div>
 <div class="abs" style="left:88px;top:10px;width:15px;height:15px;border-radius:3px;background:linear-gradient(180deg,#2fcf4a,#05932a)"></div>
 <div class="abs sbadge" style="left:95px;width:28px">187</div>
 <div class="abs stxt" style="left:132px">Motion</div>
 <div class="abs" style="left:186px;top:10px;width:15px;height:15px;border-radius:3px;background:linear-gradient(180deg,#d9f56a,#92d02a)"></div>
 <div class="abs sbadge" style="left:193px;width:15px">0</div>
 <div class="abs stxt" style="left:216px">Idling</div>
 <div class="abs" style="left:263px;top:10px;width:15px;height:15px;border-radius:3px;background:linear-gradient(180deg,#f4b040,#d88020)"></div>
 <div class="abs sbadge" style="left:270px;width:28px">446</div>
 <div class="abs stxt" style="left:306px">Stationary</div>
 <div class="abs" style="left:381px;top:10px;width:15px;height:15px;border-radius:3px;background:linear-gradient(180deg,#6fd0fb,#2f8ee6)"></div>
 <div class="abs sbadge" style="left:388px;width:21px">13</div>
 <div class="abs stxt" style="left:417px">Not positioned</div>
 <div class="abs sbadge" style="left:523px;width:28px">619</div>
 <div class="abs stxt" style="left:559px">Unlock</div>
 <div class="abs sbadge" style="left:621px;width:22px">27</div>
 <div class="abs stxt" style="left:651px">Lock</div>
 <div class="abs" style="left:695px;top:10px;width:15px;height:15px;border-radius:3px;background:linear-gradient(180deg,#6a6a6a,#3a3a3a)"></div>
 <div class="abs sbadge" style="left:703px;width:13px">0</div>
 <div class="abs stxt" style="left:724px">Offline</div>
 <div class="abs" style="left:779px;top:10px;width:15px;height:15px;border-radius:3px;background:linear-gradient(180deg,#9a9a9a,#6a6a6a)"></div>
 <div class="abs sbadge" style="left:786px;width:27px">360</div>
 <div class="abs stxt" style="left:820px">Inactivated</div>
 <svg class="abs" style="left:511px;top:9px" width="20" height="18" viewBox="0 0 20 18"><path d="M3 4.5 A4 4 0 0 1 11 4.5 V8" fill="none" stroke="#1cb43c" stroke-width="2.2"/><rect x="6" y="8" width="12" height="9.5" rx="1.5" fill="#1cb43c"/><circle cx="12" cy="12.3" r="1.5" fill="#5b79ea"/></svg>
 <svg class="abs" style="left:613px;top:9px" width="14" height="18" viewBox="0 0 14 18"><path d="M3 8 V5.5 A4 4 0 0 1 11 5.5 V8" fill="none" stroke="#fff" stroke-width="2"/><rect x="1" y="8" width="12" height="9.5" rx="1.5" fill="#fff"/><circle cx="7" cy="12.3" r="1.5" fill="#5b79ea"/></svg>
 <svg class="abs" style="left:899px;top:10px" width="16" height="16" viewBox="0 0 16 16"><circle cx="8" cy="8" r="6.8" fill="none" stroke="#fff" stroke-width="1.4"/><circle cx="8" cy="4.6" r="1.1" fill="#fff"/><path d="M8 6.8 V12" stroke="#fff" stroke-width="1.8"/></svg>
 <svg class="abs" style="left:930px;top:11px" width="14" height="14" viewBox="0 0 14 14"><circle cx="5.8" cy="5.8" r="4.3" fill="none" stroke="#fff" stroke-width="2"/><path d="M9 9 L12.5 12.5" stroke="#fff" stroke-width="2.4"/></svg>
 <div class="abs" style="left:953px;top:5px;width:150px;height:25px;background:#fff;border-radius:3px"></div>
 <div class="abs" style="left:963px;top:10px;font-size:13px;line-height:15px;color:#8a8a8a;white-space:nowrap">Enter the keywords</div>
 <svg class="abs" style="left:1451px;top:8px" width="20" height="20" viewBox="0 0 20 20"><circle cx="15" cy="4" r="3" fill="#fff"/><circle cx="4.5" cy="10" r="3" fill="#fff"/><circle cx="15" cy="16" r="3" fill="#fff"/><path d="M4.5 10 L15 4 M4.5 10 L15 16" stroke="#fff" stroke-width="1.8"/></svg>
 <svg class="abs" style="left:1493px;top:8px" width="17" height="20" viewBox="0 0 17 20"><path d="M1.5 1.5 H15.5 M1.5 18.5 H15.5" stroke="#fff" stroke-width="2"/><path d="M3.5 1.5 Q3.5 7 8.5 10 Q13.5 7 13.5 1.5 M3.5 18.5 Q3.5 13 8.5 10 Q13.5 13 13.5 18.5" fill="none" stroke="#fff" stroke-width="1.8"/></svg>
 <svg class="abs" style="left:1531px;top:8px" width="20" height="20" viewBox="0 0 20 20"><path d="M8 2 H3 Q1.5 2 1.5 3.5 V16.5 Q1.5 18 3 18 H16 Q17.5 18 17.5 16.5 V12" fill="none" stroke="#fff" stroke-width="1.8"/><path d="M7 12 Q9 5 16 5" fill="none" stroke="#fff" stroke-width="1.8"/><path d="M13 1.5 L17.5 5 L13 8.5" fill="none" stroke="#fff" stroke-width="1.8"/></svg>
 <svg class="abs" style="left:1572px;top:8px" width="20" height="20" viewBox="0 0 20 20"><path d="M8.3 1 H11.7 L12.3 3.6 L14.5 4.8 L17 3.9 L18.7 6.9 L16.7 8.6 V11.4 L18.7 13.1 L17 16.1 L14.5 15.2 L12.3 16.4 L11.7 19 H8.3 L7.7 16.4 L5.5 15.2 L3 16.1 L1.3 13.1 L3.3 11.4 V8.6 L1.3 6.9 L3 3.9 L5.5 4.8 L7.7 3.6 Z" fill="none" stroke="#fff" stroke-width="1.6" stroke-linejoin="round"/><circle cx="10" cy="10" r="3" fill="none" stroke="#fff" stroke-width="1.7"/></svg>
 <svg class="abs" style="left:1614px;top:9px" width="19" height="18" viewBox="0 0 19 18"><rect x="1.5" y="5.5" width="11" height="11" rx="2" fill="none" stroke="#fff" stroke-width="1.8"/><path d="M5.5 2.5 Q5.5 1.5 6.5 1.5 H16 Q17.5 1.5 17.5 3 V12 Q17.5 13 16.5 13" fill="none" stroke="#fff" stroke-width="1.8"/><path d="M4 9.5 H10 M4 12.5 H10" stroke="#fff" stroke-width="1.5"/></svg>
 <svg class="abs" style="left:1651px;top:9px" width="18" height="18" viewBox="0 0 18 18"><path d="M1.5 6 V1.5 H6 M12 1.5 H16.5 V6 M16.5 12 V16.5 H12 M6 16.5 H1.5 V12" fill="none" stroke="#fff" stroke-width="2"/></svg>
 <svg class="abs" style="left:1690px;top:9px" width="20" height="18" viewBox="0 0 20 18"><path d="M1.5 9 H18.5" stroke="#fff" stroke-width="2.6"/></svg>
</div>
<div id="thead" class="abs">
 <div class="abs" style="left:60px;top:0;width:1px;height:35px;background:#e6eefa"></div>
 <div class="abs" style="left:200px;top:0;width:1px;height:35px;background:#e6eefa"></div>
 <div class="abs" style="left:340px;top:0;width:1px;height:35px;background:#e6eefa"></div>
 <div class="abs" style="left:480px;top:0;width:1px;height:35px;background:#e6eefa"></div>
 <div class="abs" style="left:600px;top:0;width:1px;height:35px;background:#e6eefa"></div>
 <div class="abs" style="left:670px;top:0;width:1px;height:35px;background:#e6eefa"></div>
 <div class="abs" style="left:830px;top:0;width:1px;height:35px;background:#e6eefa"></div>
 <div class="abs" style="left:990px;top:0;width:1px;height:35px;background:#e6eefa"></div>
 <div class="abs" style="left:1090px;top:0;width:1px;height:35px;background:#e6eefa"></div>
 <div class="abs" style="left:1190px;top:0;width:1px;height:35px;background:#e6eefa"></div>
 <div class="abs" style="left:1340px;top:0;width:1px;height:35px;background:#e6eefa"></div>
 <div class="abs" style="left:1520px;top:0;width:1px;height:35px;background:#e6eefa"></div>
 <div class="abs" style="left:1680px;top:0;width:1px;height:35px;background:#e6eefa"></div>
 <div class="abs tht" style="left:15px">Index</div>
 <div class="abs tht" style="left:91px">Company</div>
 <svg class="abs" style="left:153px;top:11px" width="10" height="14" viewBox="0 0 10 14"><path d="M1 5.5 L5 1 L9 5.5Z M1 8.5 L5 13 L9 8.5Z" fill="#888"/></svg>
 <svg class="abs" style="left:214px;top:11px" width="17" height="14" viewBox="0 0 17 14"><path d="M3 6 L4.5 2 Q5 1 6.5 1 H10.5 Q12 1 12.5 2 L14 6 Q16 6.5 16 8 V12 H14 V13.5 H12 V12 H5 V13.5 H3 V12 H1 V8 Q1 6.5 3 6Z" fill="#2f4fc4"/><path d="M4.3 6 L5.5 2.6 H11.5 L12.7 6Z" fill="#c5dcf7"/><circle cx="4" cy="9" r="1.2" fill="#c5dcf7"/><circle cx="13" cy="9" r="1.2" fill="#c5dcf7"/></svg>
 <div class="abs tht" style="left:233px">Asset Name</div>
 <svg class="abs" style="left:309px;top:11px" width="10" height="14" viewBox="0 0 10 14"><path d="M1 5.5 L5 1 L9 5.5Z M1 8.5 L5 13 L9 8.5Z" fill="#888"/></svg>
 <svg class="abs" style="left:361px;top:11px" width="17" height="15" viewBox="0 0 17 15"><path d="M1 1 V14 M4 1 V14 M7.5 1 V14 M11 1 V14 M14.5 1 V14" stroke="#2f4fc4" stroke-width="1.8"/><path d="M2.5 1 V14 M9.3 1 V14" stroke="#2f4fc4" stroke-width="0.8"/></svg>
 <div class="abs tht" style="left:381px">Device ID</div>
 <svg class="abs" style="left:442px;top:11px" width="10" height="14" viewBox="0 0 10 14"><path d="M1 5.5 L5 1 L9 5.5Z M1 8.5 L5 13 L9 8.5Z" fill="#888"/></svg>
 <svg class="abs" style="left:500px;top:10px" width="13" height="16" viewBox="0 0 13 16"><rect x="1" y="0.5" width="11" height="15" rx="1.5" fill="#2f4fc4"/><rect x="2.5" y="2" width="8" height="11" fill="#c5dcf7"/><rect x="3.2" y="2.7" width="6.6" height="9.6" fill="#2f4fc4"/></svg>
 <div class="abs tht" style="left:518px">D-Type</div>
 <svg class="abs" style="left:565px;top:11px" width="10" height="14" viewBox="0 0 10 14"><path d="M1 5.5 L5 1 L9 5.5Z M1 8.5 L5 13 L9 8.5Z" fill="#888"/></svg>
 <svg class="abs" style="left:613px;top:9px" width="17" height="17" viewBox="0 0 17 17"><circle cx="8.5" cy="8.5" r="7" fill="none" stroke="#2f4fc4" stroke-width="1.6"/><circle cx="8.5" cy="8.5" r="4" fill="#2f4fc4"/></svg>
 <svg class="abs" style="left:641px;top:11px" width="10" height="14" viewBox="0 0 10 14"><path d="M1 5.5 L5 1 L9 5.5Z M1 8.5 L5 13 L9 8.5Z" fill="#888"/></svg>
 <svg class="abs" style="left:729px;top:9px" width="17" height="17" viewBox="0 0 17 17"><circle cx="8.5" cy="8.5" r="6" fill="none" stroke="#2f4fc4" stroke-width="1.7"/><circle cx="8.5" cy="8.5" r="1.8" fill="#2f4fc4"/><path d="M8.5 0.5 V4.5 M8.5 12.5 V16.5 M0.5 8.5 H4.5 M12.5 8.5 H16.5" stroke="#2f4fc4" stroke-width="1.7"/></svg>
 <svg class="abs" style="left:755px;top:11px" width="10" height="14" viewBox="0 0 10 14"><path d="M1 5.5 L5 1 L9 5.5Z M1 8.5 L5 13 L9 8.5Z" fill="#888"/></svg>
 <svg class="abs" style="left:890px;top:9px" width="17" height="18" viewBox="0 0 17 18"><circle cx="8.5" cy="8" r="2" fill="#2f4fc4"/><path d="M5 12 A5 5 0 1 1 12 12 M2.8 14 A8 8 0 1 1 14.2 14" fill="none" stroke="#2f4fc4" stroke-width="1.5"/><path d="M8.5 9 L5.5 17 H11.5Z" fill="#2f4fc4"/></svg>
 <svg class="abs" style="left:915px;top:11px" width="10" height="14" viewBox="0 0 10 14"><path d="M1 5.5 L5 1 L9 5.5Z M1 8.5 L5 13 L9 8.5Z" fill="#888"/></svg>
 <svg class="abs" style="left:1018px;top:9px" width="18" height="18" viewBox="0 0 18 18"><path d="M9 1.5 A7.5 7.5 0 1 1 3 4.5" fill="none" stroke="#2f4fc4" stroke-width="1.6"/><path d="M1.5 2 L3.5 5.5 L6.5 3" fill="none" stroke="#2f4fc4" stroke-width="1.4"/><path d="M9 5 V9.5 L11.5 11" fill="none" stroke="#2f4fc4" stroke-width="1.6"/></svg>
 <svg class="abs" style="left:1045px;top:11px" width="10" height="14" viewBox="0 0 10 14"><path d="M1 5.5 L5 1 L9 5.5Z M1 8.5 L5 13 L9 8.5Z" fill="#888"/></svg>
 <svg class="abs" style="left:1119px;top:9px" width="16" height="17" viewBox="0 0 16 17"><path d="M8 1 C5 1 3.3 3 3.3 5.5 C3.3 8.5 8 12.5 8 12.5 C8 12.5 12.7 8.5 12.7 5.5 C12.7 3 11 1 8 1Z" fill="#2f4fc4"/><circle cx="8" cy="5.3" r="1.8" fill="#c5dcf7"/><path d="M4 12 Q1 13 1.5 14.5 Q2.5 16 8 16 Q13.5 16 14.5 14.5 Q15 13 12 12" fill="none" stroke="#2f4fc4" stroke-width="1.3"/></svg>
 <svg class="abs" style="left:1145px;top:11px" width="10" height="14" viewBox="0 0 10 14"><path d="M1 5.5 L5 1 L9 5.5Z M1 8.5 L5 13 L9 8.5Z" fill="#888"/></svg>
 <svg class="abs" style="left:1244px;top:11px" width="17" height="13" viewBox="0 0 17 13"><rect x="1" y="2" width="13.5" height="9.5" rx="1.5" fill="none" stroke="#2f4fc4" stroke-width="1.6"/><rect x="14.5" y="5" width="2" height="3.5" fill="#2f4fc4"/><rect x="3.5" y="4.5" width="6" height="4.5" fill="#2f4fc4"/></svg>
 <svg class="abs" style="left:1270px;top:11px" width="10" height="14" viewBox="0 0 10 14"><path d="M1 5.5 L5 1 L9 5.5Z M1 8.5 L5 13 L9 8.5Z" fill="#888"/></svg>
 <svg class="abs" style="left:1423px;top:9px" width="12" height="17" viewBox="0 0 12 17"><path d="M6 0.5 C2.8 0.5 0.5 2.8 0.5 6 C0.5 10 6 16.5 6 16.5 C6 16.5 11.5 10 11.5 6 C11.5 2.8 9.2 0.5 6 0.5Z" fill="#2f4fc4"/><circle cx="6" cy="6" r="2" fill="#c5dcf7"/></svg>
 <svg class="abs" style="left:1578px;top:10px" width="17" height="17" viewBox="0 0 17 17"><circle cx="8.5" cy="8.5" r="2.6" fill="none" stroke="#2f4fc4" stroke-width="1.6"/><path d="M8.5 2 V5.9 M8.5 11.1 V16 M1 8.5 H5.9 M11.1 8.5 H16" stroke="#2f4fc4" stroke-width="1.6"/></svg>
 <svg class="abs" style="left:1605px;top:11px" width="10" height="14" viewBox="0 0 10 14"><path d="M1 5.5 L5 1 L9 5.5Z M1 8.5 L5 13 L9 8.5Z" fill="#888"/></svg>
 <svg class="abs" style="left:1691px;top:9px" width="15" height="17" viewBox="0 0 15 17"><path d="M3 9 V11 M6 7 V11 M9 4.5 V11 M12 1.5 V11" stroke="#2f4fc4" stroke-width="2"/><text x="7.5" y="16.5" text-anchor="middle" font-family="Liberation Sans" font-size="6" font-weight="bold" fill="#2f4fc4">GPS</text></svg>
 <svg class="abs" style="left:1716px;top:11px" width="10" height="14" viewBox="0 0 10 14"><path d="M1 5.5 L5 1 L9 5.5Z M1 8.5 L5 13 L9 8.5Z" fill="#888"/></svg>
</div>
<div id="tbody" class="abs">
 <div class="abs" style="left:0;top:0px;width:1722px;height:35px;background:#fff"></div>
 <div class="abs td" style="left:0px;top:0px;width:60px">1</div>
 <div class="abs td" style="left:60px;top:0px;width:140px">ZainSudan</div>
 <div class="abs td" style="left:200px;top:0px;width:140px"><a>8025203320</a></div>
 <div class="abs td" style="left:340px;top:0px;width:140px"><a>8025203320</a></div>
 <div class="abs td" style="left:480px;top:0px;width:120px">JT701D</div>
 <svg class="abs" style="left:626px;top:8px" width="18" height="18" viewBox="0 0 18 18"><path d="M5.2 2.1 L16.7 13.7" stroke="#00c84a" stroke-width="2.8" stroke-linecap="round"/><path d="M15.1 3.9 L8.6 10.4" stroke="#00c84a" stroke-width="5" stroke-linecap="round"/><path d="M8.4 10.6 L6.2 13" stroke="#00c84a" stroke-width="1.5"/><path d="M2.3 11.3 A5.2 5.2 0 0 0 7.5 16.7 M4.2 11.7 A3.2 3.2 0 0 0 7.2 14.8" fill="none" stroke="#00c84a" stroke-width="1.2"/></svg>
 <div class="abs td" style="left:670px;top:0px;width:160px">2025-11-30 08:19:36</div>
 <div class="abs td" style="left:830px;top:0px;width:160px">2025-11-30 13:46:22</div>
 <div class="abs td" style="left:990px;top:0px;width:100px">70</div>
 <div class="abs td" style="left:1090px;top:0px;width:100px">12653</div>
 <div class="abs td" style="left:1190px;top:0px;width:150px"><span style="position:absolute;left:64px">89</span></div>
 <div class="abs" style="left:0;top:35px;width:1722px;height:35px;background:#f9f9fb"></div>
 <div class="abs td" style="left:0px;top:35px;width:60px">2</div>
 <div class="abs td" style="left:60px;top:35px;width:140px">ZainSudan</div>
 <div class="abs td" style="left:200px;top:35px;width:140px"><a>8025203211</a></div>
 <div class="abs td" style="left:340px;top:35px;width:140px"><a>8025203211</a></div>
 <div class="abs td" style="left:480px;top:35px;width:120px">JT701D</div>
 <svg class="abs" style="left:626px;top:43px" width="18" height="18" viewBox="0 0 18 18"><path d="M5.2 2.1 L16.7 13.7" stroke="#00c84a" stroke-width="2.8" stroke-linecap="round"/><path d="M15.1 3.9 L8.6 10.4" stroke="#00c84a" stroke-width="5" stroke-linecap="round"/><path d="M8.4 10.6 L6.2 13" stroke="#00c84a" stroke-width="1.5"/><path d="M2.3 11.3 A5.2 5.2 0 0 0 7.5 16.7 M4.2 11.7 A3.2 3.2 0 0 0 7.2 14.8" fill="none" stroke="#00c84a" stroke-width="1.2"/></svg>
 <div class="abs td" style="left:670px;top:35px;width:160px">2025-12-01 12:27:03</div>
 <div class="abs td" style="left:830px;top:35px;width:160px">2025-12-01 12:27:03</div>
 <div class="abs td" style="left:990px;top:35px;width:100px">72</div>
 <div class="abs td" style="left:1090px;top:35px;width:100px">11192</div>
 <div class="abs td" style="left:1190px;top:35px;width:150px"><span style="position:absolute;left:64px">80</span></div>
 <div class="abs" style="left:0;top:70px;width:1722px;height:35px;background:#fff"></div>
 <div class="abs td" style="left:0px;top:70px;width:60px">3</div>
 <div class="abs td" style="left:60px;top:70px;width:140px">ZainSudan</div>
 <div class="abs td" style="left:200px;top:70px;width:140px"><a>8025203314</a></div>
 <div class="abs td" style="left:340px;top:70px;width:140px"><a>8025203314</a></div>
 <div class="abs td" style="left:480px;top:70px;width:120px">JT701D</div>
 <svg class="abs" style="left:626px;top:78px" width="18" height="18" viewBox="0 0 18 18"><path d="M5.2 2.1 L16.7 13.7" stroke="#00c84a" stroke-width="2.8" stroke-linecap="round"/><path d="M15.1 3.9 L8.6 10.4" stroke="#00c84a" stroke-width="5" stroke-linecap="round"/><path d="M8.4 10.6 L6.2 13" stroke="#00c84a" stroke-width="1.5"/><path d="M2.3 11.3 A5.2 5.2 0 0 0 7.5 16.7 M4.2 11.7 A3.2 3.2 0 0 0 7.2 14.8" fill="none" stroke="#00c84a" stroke-width="1.2"/></svg>
 <div class="abs td" style="left:670px;top:70px;width:160px">2025-12-01 12:25:28</div>
 <div class="abs td" style="left:830px;top:70px;width:160px">2025-12-01 12:25:29</div>
 <div class="abs td" style="left:990px;top:70px;width:100px">70</div>
 <div class="abs td" style="left:1090px;top:70px;width:100px">14014</div>
 <div class="abs td" style="left:1190px;top:70px;width:150px"><span style="position:absolute;left:64px">68</span></div>
 <div class="abs" style="left:0;top:105px;width:1722px;height:35px;background:#f9f9fb"></div>
 <div class="abs td" style="left:0px;top:105px;width:60px">4</div>
 <div class="abs td" style="left:60px;top:105px;width:140px">ZainSudan</div>
 <div class="abs td" style="left:200px;top:105px;width:140px"><a>8025203540</a></div>
 <div class="abs td" style="left:340px;top:105px;width:140px"><a>8025203540</a></div>
 <div class="abs td" style="left:480px;top:105px;width:120px">JT701D</div>
 <svg class="abs" style="left:626px;top:113px" width="18" height="18" viewBox="0 0 18 18"><path d="M5.2 2.1 L16.7 13.7" stroke="#00c84a" stroke-width="2.8" stroke-linecap="round"/><path d="M15.1 3.9 L8.6 10.4" stroke="#00c84a" stroke-width="5" stroke-linecap="round"/><path d="M8.4 10.6 L6.2 13" stroke="#00c84a" stroke-width="1.5"/><path d="M2.3 11.3 A5.2 5.2 0 0 0 7.5 16.7 M4.2 11.7 A3.2 3.2 0 0 0 7.2 14.8" fill="none" stroke="#00c84a" stroke-width="1.2"/></svg>
 <div class="abs td" style="left:670px;top:105px;width:160px">2025-12-01 12:08:09</div>
 <div class="abs td" style="left:830px;top:105px;width:160px">2025-12-01 12:08:09</div>
 <div class="abs td" style="left:990px;top:105px;width:100px">70</div>
 <div class="abs td" style="left:1090px;top:105px;width:100px">8863</div>
 <div class="abs td" style="left:1190px;top:105px;width:150px"><span style="position:absolute;left:64px">98</span></div>
 <div class="abs" style="left:0;top:140px;width:1722px;height:35px;background:#fff"></div>
 <div class="abs td" style="left:0px;top:140px;width:60px">5</div>
 <div class="abs td" style="left:60px;top:140px;width:140px">ZainSudan</div>
 <div class="abs td" style="left:200px;top:140px;width:140px"><a>8025202844</a></div>
 <div class="abs td" style="left:340px;top:140px;width:140px"><a>8025202844</a></div>
 <div class="abs td" style="left:480px;top:140px;width:120px">JT701D</div>
 <svg class="abs" style="left:626px;top:148px" width="18" height="18" viewBox="0 0 18 18"><path d="M5.2 2.1 L16.7 13.7" stroke="#00c84a" stroke-width="2.8" stroke-linecap="round"/><path d="M15.1 3.9 L8.6 10.4" stroke="#00c84a" stroke-width="5" stroke-linecap="round"/><path d="M8.4 10.6 L6.2 13" stroke="#00c84a" stroke-width="1.5"/><path d="M2.3 11.3 A5.2 5.2 0 0 0 7.5 16.7 M4.2 11.7 A3.2 3.2 0 0 0 7.2 14.8" fill="none" stroke="#00c84a" stroke-width="1.2"/></svg>
 <div class="abs td" style="left:670px;top:140px;width:160px">2025-12-01 12:39:36</div>
 <div class="abs td" style="left:830px;top:140px;width:160px">2025-12-01 12:39:37</div>
 <div class="abs td" style="left:990px;top:140px;width:100px">70</div>
 <div class="abs td" style="left:1090px;top:140px;width:100px">14038</div>
 <div class="abs td" style="left:1190px;top:140px;width:150px"><span style="position:absolute;left:64px">95</span></div>
 <div class="abs" style="left:60px;top:0;width:1px;height:165px;background:#ebedf3"></div>
 <div class="abs" style="left:200px;top:0;width:1px;height:165px;background:#ebedf3"></div>
 <div class="abs" style="left:340px;top:0;width:1px;height:165px;background:#ebedf3"></div>
 <div class="abs" style="left:480px;top:0;width:1px;height:165px;background:#ebedf3"></div>
 <div class="abs" style="left:600px;top:0;width:1px;height:165px;background:#ebedf3"></div>
 <div class="abs" style="left:670px;top:0;width:1px;height:165px;background:#ebedf3"></div>
 <div class="abs" style="left:830px;top:0;width:1px;height:165px;background:#ebedf3"></div>
 <div class="abs" style="left:990px;top:0;width:1px;height:165px;background:#ebedf3"></div>
 <div class="abs" style="left:1090px;top:0;width:1px;height:165px;background:#ebedf3"></div>
 <div class="abs" style="left:1190px;top:0;width:1px;height:165px;background:#ebedf3"></div>
 <div class="abs" style="left:1340px;top:0;width:1px;height:165px;background:#ebedf3"></div>
 <div class="abs" style="left:0;top:35px;width:1722px;height:1px;background:#ebedf3"></div>
 <div class="abs" style="left:0;top:70px;width:1722px;height:1px;background:#ebedf3"></div>
 <div class="abs" style="left:0;top:105px;width:1722px;height:1px;background:#ebedf3"></div>
 <div class="abs" style="left:0;top:140px;width:1722px;height:1px;background:#ebedf3"></div>
</div>
<div id="hscroll" class="abs"><div class="abs" style="left:0;top:1px;width:1375px;height:13px;background:#93a7f2"></div></div>
<div class="abs" style="left:1905px;top:731px;width:15px;height:165px;background:#e8ecfb"></div><div class="abs" style="left:1905px;top:731px;width:15px;height:78px;background:#93a7f2"></div>
<!--POPUP-->
<div class="abs" style="left:1463px;top:730px;width:449px;height:164px;background:#fff;border-radius:7px;box-shadow:0 2px 10px rgba(0,0,0,.18)"></div>
<svg class="abs" style="left:1476px;top:746px" width="21" height="21" viewBox="0 0 21 21"><circle cx="10.5" cy="10.5" r="9.8" fill="#f0504a"/><path d="M10.5 4.5 V12" stroke="#fff" stroke-width="2.4" stroke-linecap="round"/><circle cx="10.5" cy="15.6" r="1.4" fill="#fff"/></svg>
<div class="abs" style="left:1504px;top:746px;font-size:16px;line-height:18px;font-weight:bold;color:#303133;white-space:nowrap">Exit fence alarm</div>
<div class="abs pop" style="top:773px"><b>Device: 8025203386(8025203386)</b></div>
<div class="abs pop" style="top:797px"><b>Time:</b> 2025-12-01 12:36:39</div>
<div class="abs pop" style="top:821px"><b>Lat&amp;Lng:</b> 19.82723700,36.80779500</div>
<div class="abs pop" style="top:842px;line-height:20px;white-space:normal;width:380px"><b>Location:</b> Port Sudan, Port Sudan Distrikt, Red Sea State, Sud<br>an</div>
<svg class="abs" style="left:1851px;top:740px" width="16" height="16" viewBox="0 0 16 16"><path d="M2 14 L2.5 10.5 L11 2 Q12 1 13 2 L14 3 Q15 4 14 5 L5.5 13.5 Z M9.5 3.5 L12.5 6.5" fill="none" stroke="#3f66d8" stroke-width="1.6" stroke-linejoin="round"/></svg>
<svg class="abs" style="left:1881px;top:740px" width="13" height="13" viewBox="0 0 13 13"><path d="M1.5 1.5 L11.5 11.5 M11.5 1.5 L1.5 11.5" stroke="#888" stroke-width="1.2"/></svg>
<svg class="abs" style="left:1866px;top:758px" width="47" height="47" viewBox="0 0 47 47">
 <defs><radialGradient id="gb" cx="0.4" cy="0.25" r="0.85"><stop offset="0" stop-color="#7fb0fa"/><stop offset=".45" stop-color="#3f6ae6"/><stop offset="1" stop-color="#3a14c0"/></radialGradient></defs>
 <circle cx="23.5" cy="23.5" r="22.5" fill="#f2f2f2" stroke="#777" stroke-width="1.2"/>
 <circle cx="23.5" cy="23.5" r="20.5" fill="url(#gb)"/>
 <path d="M4 26 Q22 22 44 30 Q38 42 23 44 Q9 41 4 26Z" fill="#3216b8" opacity=".6"/>
 <g transform="translate(18 18)"><circle r="7.5" fill="none" stroke="#fff" stroke-width="4" stroke-dasharray="3.2 2.6"/><circle r="6" fill="#fff"/><circle r="3" fill="#3a3ad0"/><circle r="1.2" fill="#fff"/></g>
 <g transform="translate(31 31)"><circle r="4.8" fill="none" stroke="#fff" stroke-width="2.6" stroke-dasharray="2 1.8"/><circle r="3.6" fill="none" stroke="#fff" stroke-width="1.3"/><circle r="1.3" fill="#fff"/></g>
</svg>
<!--/POPUP-->
</body></html>
